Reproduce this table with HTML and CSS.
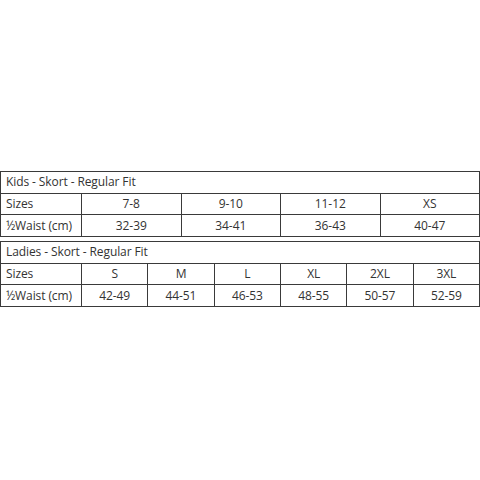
FILE: index.html
```
<!DOCTYPE html>
<html>
<head>
<meta charset="utf-8">
<link rel="stylesheet" href="styles.css">
</head>
<body>
<div class="page">
  <table class="chart">
    <colgroup><col class="label-col"><col><col><col><col></colgroup>
    <tr><td class="title" colspan="5">Kids - Skort - Regular Fit</td></tr>
    <tr><td class="label">Sizes</td><td>7-8</td><td>9-10</td><td>11-12</td><td>XS</td></tr>
    <tr><td class="label">½Waist (cm)</td><td>32-39</td><td>34-41</td><td>36-43</td><td>40-47</td></tr>
  </table>
  <table class="chart">
    <colgroup><col class="label-col"><col><col><col><col><col><col></colgroup>
    <tr><td class="title" colspan="7">Ladies - Skort - Regular Fit</td></tr>
    <tr><td class="label">Sizes</td><td>S</td><td>M</td><td>L</td><td>XL</td><td>2XL</td><td>3XL</td></tr>
    <tr><td class="label">½Waist (cm)</td><td>42-49</td><td>44-51</td><td>46-53</td><td>48-55</td><td>50-57</td><td>52-59</td></tr>
  </table>
</div>
</body>
</html>
```
FILE: styles.css
```
html, body {
  margin: 0;
  padding: 0;
  background: #fff;
}
.page {
  width: 480px;
  height: 480px;
  padding-top: 171px;
  box-sizing: border-box;
  display: flex;
  flex-direction: column;
  gap: 4px;
  font-family: "Open Sans", "Noto Sans", sans-serif;
  font-size: 12px;
  letter-spacing: -0.1px;
  color: #333;
}
.chart {
  width: 480px;
  border-collapse: collapse;
  table-layout: fixed;
}
.label-col {
  width: 81px;
}
.chart tr {
  height: 21.7px;
}
.chart td {
  border: 1.5px solid #3a3a3a;
  padding: 0;
  text-align: center;
  line-height: 18px;
  white-space: nowrap;
}
.chart td.title,
.chart td.label {
  text-align: left;
  padding-left: 5px;
}
```
